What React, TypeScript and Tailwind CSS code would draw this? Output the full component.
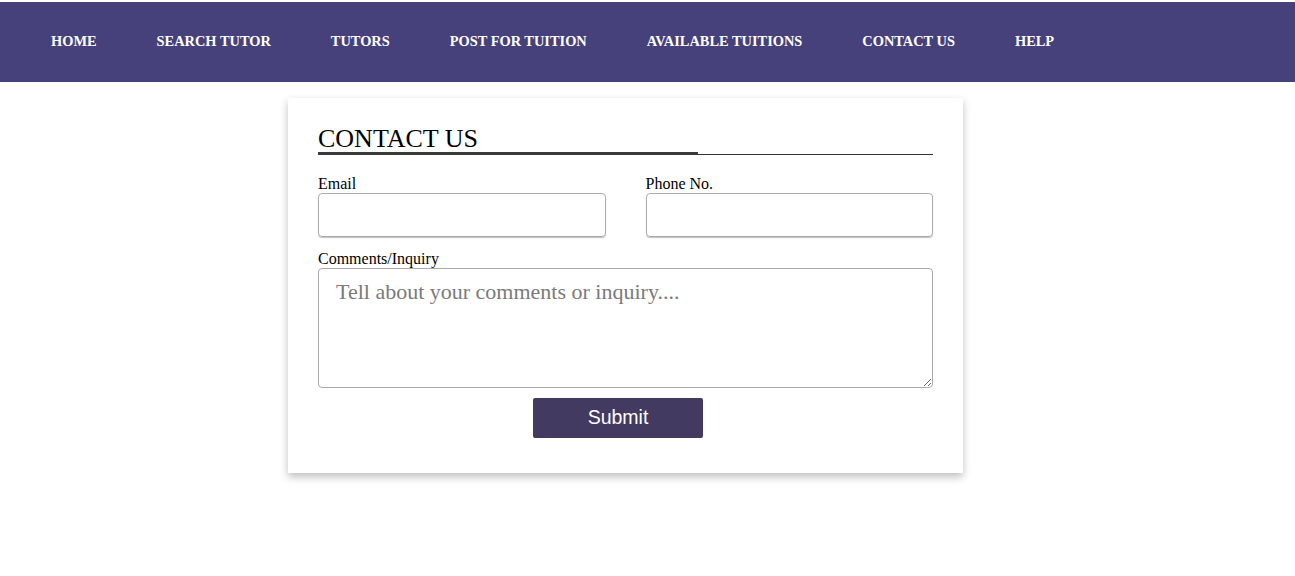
import React from "react";

const navItems = ["HOME", "SEARCH TUTOR", "TUTORS", "POST FOR TUITION", "AVAILABLE TUITIONS", "CONTACT US", "HELP"];

export default function App() {
  return (
    <div className="min-h-[576px] bg-white" style={{ fontFamily: '"Liberation Serif", serif' }}>
      <div className="h-[2px]" />
      <nav className="flex h-[80px] items-center bg-[#46417a] pl-[21px]">
        {navItems.map((n) => (
          <a key={n} className="px-[30px] text-[14.4px] font-bold text-white" style={{ fontFamily: '"Liberation Serif", serif' }}>
            {n}
          </a>
        ))}
      </nav>
      <div className="ml-[288px] mt-[16px] w-[675px] bg-white px-[30px] pb-[35px] pt-[25px] shadow-[0_4px_8px_rgba(0,0,0,0.25)]">
        <div className="relative border-b border-[#333]">
          <h2 className="text-[26px] leading-[31px] text-black">CONTACT US</h2>
          <div className="absolute bottom-[-1px] left-0 h-[3px] w-[380px] bg-[#3a3a3a]" />
        </div>
        <div className="mt-[20px] grid grid-cols-2 gap-[40px]">
          <div className="flex flex-col">
            <label className="text-[16px] leading-[18px] text-black">Email</label>
            <input className="mt-0 h-[44px] rounded-[4px] border border-[#aaa] shadow-[0_1px_1px_rgba(0,0,0,0.25)]" />
          </div>
          <div className="flex flex-col">
            <label className="text-[16px] leading-[18px] text-black">Phone No.</label>
            <input className="mt-0 h-[44px] rounded-[4px] border border-[#aaa] shadow-[0_1px_1px_rgba(0,0,0,0.25)]" />
          </div>
        </div>
        <div className="mt-[13px] flex flex-col">
          <label className="text-[16px] leading-[18px] text-black">Comments/Inquiry</label>
          <textarea
            placeholder="Tell about your comments or inquiry...."
            className="mt-0 h-[120px] rounded-[4px] border border-[#aaa] px-[17px] py-[9px] text-[22px] leading-[28px] placeholder:text-[#7a7a7a]"
            style={{ fontFamily: '"Liberation Serif", serif' }}
          />
        </div>
        <div className="mt-[10px] pl-[215px]">
          <button
            className="h-[40px] w-[170px] rounded-[2px] bg-[#433a62] text-[19.5px] text-white"
            style={{ fontFamily: '"Liberation Sans", Arial, sans-serif' }}
          >
            Submit
          </button>
        </div>
      </div>
    </div>
  );
}
